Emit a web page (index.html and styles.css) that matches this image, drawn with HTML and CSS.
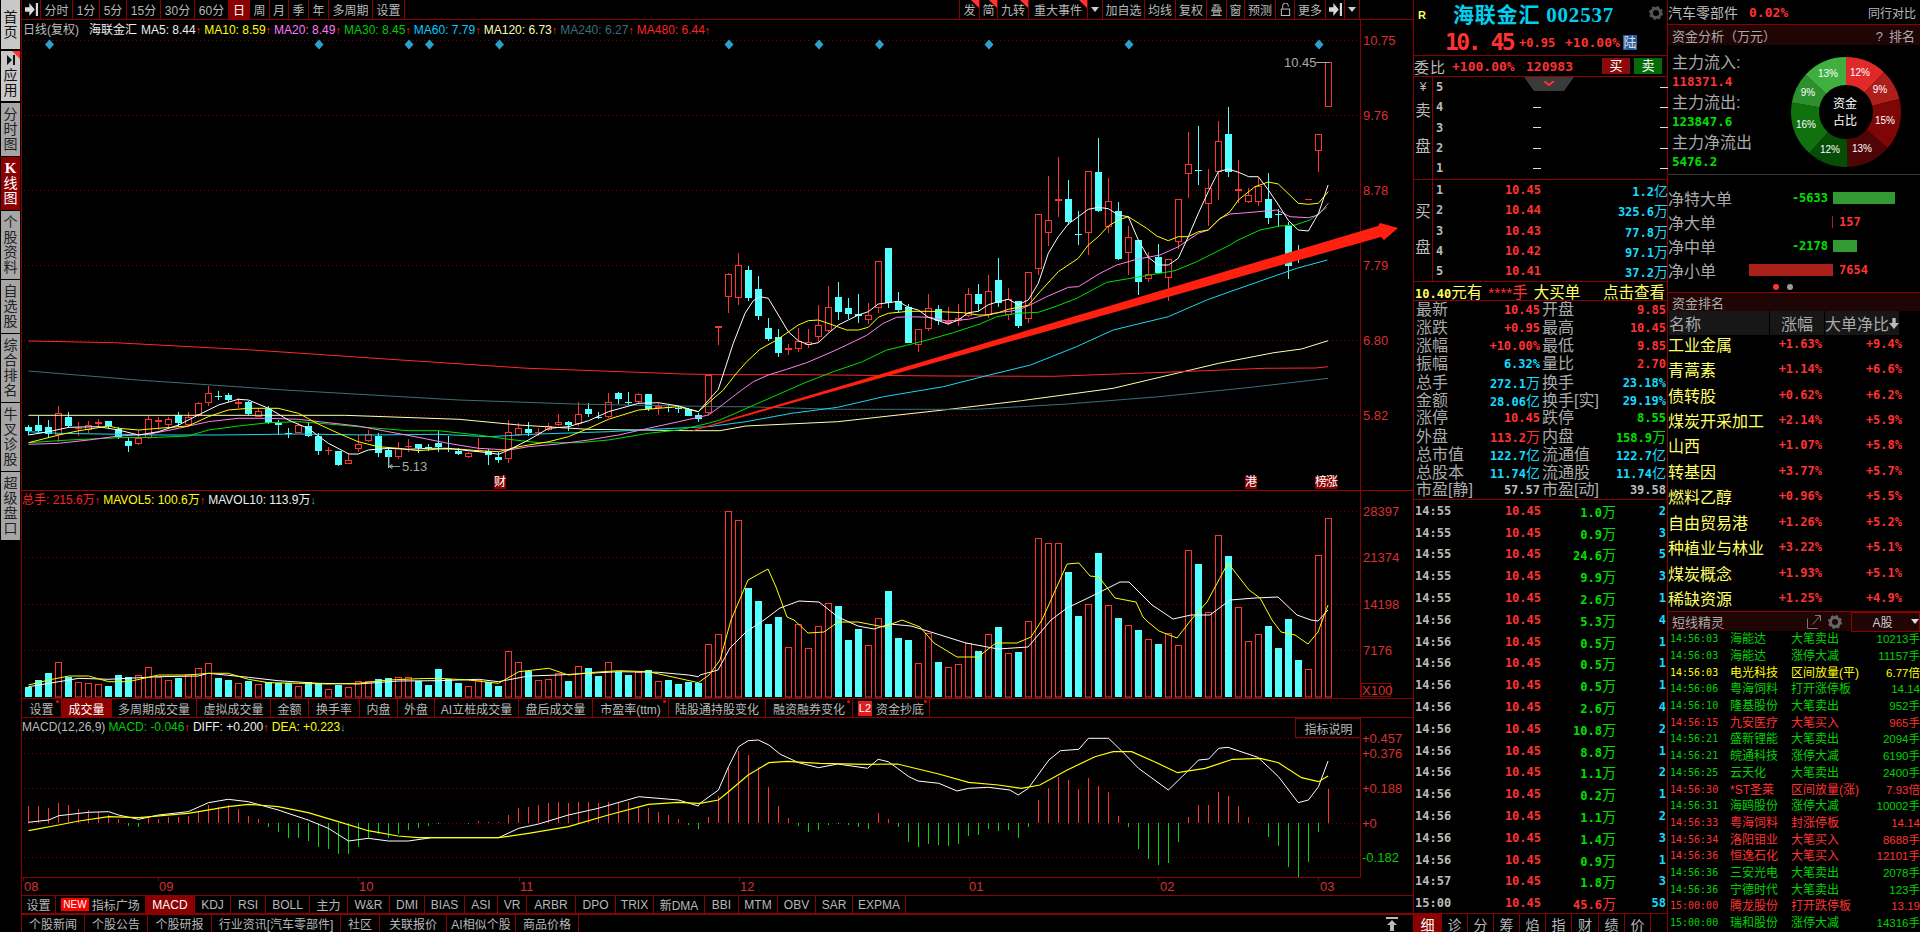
FILE: index.html
```html
<!DOCTYPE html>
<html lang="zh-CN">
<head>
<meta charset="utf-8">
<title>海联金汇 002537 日线</title>
<link rel="stylesheet" href="styles.css">
</head>
<body>
<div class="app">
  <nav class="side">
    <a class="vt lite h49">首页</a>
    <a class="vt lite h50 flag"><svg class="ic10" viewBox="0 0 10 10"><path d="M1 0l5 5-5 5zM7 0h2v10H7z" fill="#111"/></svg><span>应用</span></a>
    <a class="vt h53">分时图</a>
    <a class="vt on h53"><b class="kk">K</b><span>线图</span></a>
    <a class="vt h68">个股资料</a>
    <a class="vt h53">自选股</a>
    <a class="vt h68">综合排名</a>
    <a class="vt h68">牛叉诊股</a>
    <a class="vt h68">超级盘口</a>
  </nav>

  <main class="chartcol">
    <header class="toolbar">
      <div class="tabs tb-left">
        <a><svg class="ic12" viewBox="0 0 12 12"><path d="M0 4h4V0l5 6-5 6V8H0zM10 0h2v12h-2z" fill="#d8d8d8"/></svg></a><a>分时</a><a>1分</a><a>5分</a><a>15分</a><a>30分</a><a>60分</a><a class="on">日</a><a>周</a><a>月</a><a>季</a><a>年</a><a>多周期</a><a>设置</a>
      </div>
      <div class="tabs tb-right">
        <a class="flag">发</a><a class="flag">简</a><a class="flag">九转</a><a class="flag">重大事件</a><a><i class="caret"></i></a><a>加自选</a><a>均线</a><a>复权</a><a>叠</a><a>窗</a><a>预测</a><a><svg class="ic12" viewBox="0 0 12 14"><path d="M3 6V3a3 3 0 0 1 6 0v1" fill="none" stroke="#ccc"/><rect x="1.500" y="6.500" width="9" height="7" fill="none" stroke="#ccc"/></svg></a><a>更多</a><a><svg class="ic12" viewBox="0 0 12 12"><path d="M0 4h4V0l5 6-5 6V8H0zM10 0h2v12h-2z" fill="#d8d8d8"/></svg></a><a><i class="caret"></i></a>
      </div>
    </header>

    <section class="pane pane-main">
      <div class="legend">
        <span class="gy cn">日线(复权)</span><span class="wt cn gap">海联金汇</span>
        <span class="wt">MA5: 8.44<em>↑</em></span><span class="ylw">MA10: 8.59<em>↑</em></span><span class="mag">MA20: 8.49<em>↑</em></span><span class="grn">MA30: 8.45<em>↑</em></span><span class="cyn">MA60: 7.79<em>↑</em></span><span class="pale">MA120: 6.73<em>↑</em></span><span class="teal">MA240: 6.27<em>↑</em></span><span class="red">MA480: 6.44<em>↑</em></span>
      </div>
      <svg id="main" class="plot" viewBox="22 20 1391 471" width="1391" height="471">
        <g id="main-grid"></g>
        <g id="main-candles"></g>
        <g id="main-lines"></g>
        <text class="ax" x="1363" y="45">10.75</text>
        <text class="ax" x="1363" y="120">9.76</text>
        <text class="ax" x="1363" y="195">8.78</text>
        <text class="ax" x="1363" y="270">7.79</text>
        <text class="ax" x="1363" y="345">6.80</text>
        <text class="ax" x="1363" y="420">5.82</text>
        <text class="note" x="1284" y="67">10.45</text>
        <path d="M1316 62.500h13" stroke="#aaa" fill="none"/>
        <text class="note" x="402" y="471">5.13</text>
        <path d="M389 455v11.500h11M389 466.500l3-2v4z" stroke="#999" fill="none"/>
        <polygon points="693,430 1378,226 1380,223 1398,228 1384,240 1381,237 693,431" fill="#ff2010"/>
      </svg>
      <span class="event ev1">财</span><span class="event ev2">港</span><span class="event ev3">榜涨</span>
    </section>

    <section class="pane pane-vol">
      <div class="legend legend-vol">
        <span class="red"><span class="cn">总手</span>: 215.6万<em>↑</em></span><span class="ylw">MAVOL5: 100.6万<em>↑</em></span><span class="wt">MAVOL10: 113.9万<em class="dn">↓</em></span>
      </div>
      <svg id="vol" class="plot" viewBox="22 491 1391 207" width="1391" height="207">
        <g id="vol-grid"></g>
        <g id="vol-bars"></g>
        <g id="vol-lines"></g>
        <text class="ax" x="1363" y="516">28397</text>
        <text class="ax" x="1363" y="562">21374</text>
        <text class="ax" x="1363" y="609">14198</text>
        <text class="ax" x="1363" y="655">7176</text>
        <rect x="1361.500" y="683.500" width="29" height="13" fill="none" stroke="#8b0000"/>
        <text class="ax" x="1362" y="695">X100</text>
      </svg>
    </section>

    <div class="tabs subtabs">
      <a class="dot">设置</a><a class="on">成交量</a><a>多周期成交量</a><a>虚拟成交量</a><a>金额</a><a>换手率</a><a>内盘</a><a>外盘</a><a>AI立桩成交量</a><a>盘后成交量</a><a class="dot">市盈率(ttm)</a><a>陆股通持股变化</a><a class="dot">融资融券变化</a><a class="dot"><i class="l2">L2</i>资金抄底</a>
    </div>

    <section class="pane pane-macd">
      <div class="legend legend-macd">
        <span class="gy">MACD(12,26,9)</span><span class="grn">MACD: -0.046<em>↑</em></span><span class="wt">DIFF: +0.200<em>↑</em></span><span class="ylw">DEA: +0.223<em class="dn">↓</em></span>
      </div>
      <a class="explain">指标说明</a>
      <svg id="macd" class="plot" viewBox="22 718 1391 177" width="1391" height="177">
        <g id="macd-grid"></g>
        <g id="macd-bars"></g>
        <g id="macd-lines"></g>
        <text class="ax" x="1362" y="743">+0.457</text>
        <text class="ax" x="1362" y="758">+0.376</text>
        <text class="ax" x="1362" y="793">+0.188</text>
        <text class="ax" x="1362" y="828">+0</text>
        <text class="ax axg" x="1362" y="862">-0.182</text>
        <text class="ax" x="24" y="891">08</text>
        <text class="ax" x="159" y="891">09</text>
        <text class="ax" x="359" y="891">10</text>
        <text class="ax" x="520" y="891">11</text>
        <text class="ax" x="740" y="891">12</text>
        <text class="ax" x="969" y="891">01</text>
        <text class="ax" x="1160" y="891">02</text>
        <text class="ax" x="1320" y="891">03</text>
      </svg>
    </section>

    <div class="tabs indtabs">
      <a>设置</a><a><i class="newb">NEW</i>指标广场</a><a class="on">MACD</a><a>KDJ</a><a>RSI</a><a>BOLL</a><a>主力</a><a>W&amp;R</a><a>DMI</a><a>BIAS</a><a>ASI</a><a>VR</a><a>ARBR</a><a>DPO</a><a>TRIX</a><a>新DMA</a><a>BBI</a><a>MTM</a><a>OBV</a><a>SAR</a><a>EXPMA</a>
    </div>
    <div class="bottomrow">
      <div class="tabs newstabs">
        <a>个股新闻</a><a>个股公告</a><a>个股研报</a><a>行业资讯[汽车零部件]</a><a>社区</a><a>关联报价</a><a>AI相似个股</a><a>商品价格</a>
      </div>
      <svg class="ic-top" viewBox="0 0 12 14"><path d="M0 0h12v2H0zM6 3l5 5H8v6H4V8H1z" fill="#bbb"/></svg>
    </div>
  </main>

  <aside class="quote">
    <div class="q-head">
      <div class="q-title"><b class="rr">R</b><span class="q-name">海联金汇 002537</span><svg class="gear" viewBox="0 0 14 14"><circle cx="7" cy="7" r="4.500" fill="none" stroke="#555" stroke-width="3"/><circle cx="7" cy="7" r="6" fill="none" stroke="#555" stroke-width="2" stroke-dasharray="2.400 2.300"/></svg></div>
      <div class="q-price"><span class="big">10. 45</span><span class="n r chg">+0.95</span><span class="n r pct">+10.00%</span><i class="lu">陆</i></div>
    </div>
    <div class="q-ratio">
      <span class="lb">委比</span><span class="n r wb">+100.00%</span><span class="n r wv">120983</span><a class="btn buy">买</a><a class="btn sell">卖</a>
    </div>
    <div class="book book-sell">
      <div class="bside"><span class="yen">¥</span><span>卖</span><span>盘</span></div>
      <div class="brows">
        <div class="br"><span class="n gy">5</span><span></span><span class="dash"></span></div>
        <div class="br"><span class="n gy">4</span><span class="dash"></span><span class="dash"></span></div>
        <div class="br"><span class="n gy">3</span><span class="dash"></span><span class="dash"></span></div>
        <div class="br"><span class="n gy">2</span><span class="dash"></span><span class="dash"></span></div>
        <div class="br"><span class="n gy">1</span><span class="dash"></span><span class="dash"></span></div>
      </div>
      <div class="fold"><svg viewBox="0 0 12 6" width="12" height="6"><path d="M1 0l5 4 5-4" fill="none" stroke="#f33" stroke-width="2"/></svg></div>
    </div>
    <div class="book book-buy">
      <div class="bside"><span>买</span><span>盘</span></div>
      <div class="brows">
        <div class="br"><span class="n gy">1</span><span class="n r">10.45</span><span class="n c">1.2<i>亿</i></span></div>
        <div class="br"><span class="n gy">2</span><span class="n r">10.44</span><span class="n c">325.6<i>万</i></span></div>
        <div class="br"><span class="n gy">3</span><span class="n r">10.43</span><span class="n c">77.8<i>万</i></span></div>
        <div class="br"><span class="n gy">4</span><span class="n r">10.42</span><span class="n c">97.1<i>万</i></span></div>
        <div class="br"><span class="n gy">5</span><span class="n r">10.41</span><span class="n c">37.2<i>万</i></span></div>
      </div>
    </div>
    <div class="bigorder"><span><b class="n">10.40</b>元有</span><span class="r">****手</span><span>大买单</span><span class="right">点击查看</span></div>
    <div class="stats">
      <div class="st"><p><span>最新</span><b class="n r">10.45</b></p><p><span>开盘</span><b class="n r">9.85</b></p></div>
      <div class="st"><p><span>涨跌</span><b class="n r">+0.95</b></p><p><span>最高</span><b class="n r">10.45</b></p></div>
      <div class="st"><p><span>涨幅</span><b class="n r">+10.00%</b></p><p><span>最低</span><b class="n r">9.85</b></p></div>
      <div class="st"><p><span>振幅</span><b class="n c">6.32%</b></p><p><span>量比</span><b class="n r">2.70</b></p></div>
      <div class="st"><p><span>总手</span><b class="n c">272.1<i>万</i></b></p><p><span>换手</span><b class="n c">23.18%</b></p></div>
      <div class="st"><p><span>金额</span><b class="n c">28.06<i>亿</i></b></p><p><span>换手[实]</span><b class="n c">29.19%</b></p></div>
      <div class="st"><p><span>涨停</span><b class="n r">10.45</b></p><p><span>跌停</span><b class="n g">8.55</b></p></div>
      <div class="st"><p><span>外盘</span><b class="n r">113.2<i>万</i></b></p><p><span>内盘</span><b class="n g">158.9<i>万</i></b></p></div>
      <div class="st"><p><span>总市值</span><b class="n c">122.7<i>亿</i></b></p><p><span>流通值</span><b class="n c">122.7<i>亿</i></b></p></div>
      <div class="st"><p><span>总股本</span><b class="n c">11.74<i>亿</i></b></p><p><span>流通股</span><b class="n c">11.74<i>亿</i></b></p></div>
      <div class="st"><p><span>市盈[静]</span><b class="n gy">57.57</b></p><p><span>市盈[动]</span><b class="n gy">39.58</b></p></div>
    </div>
    <div class="ticks">
      <div class="tk"><span class="n gy">14:55</span><span class="n r">10.45</span><span class="n g">1.0<i>万</i></span><span class="n c">2</span></div>
      <div class="tk"><span class="n gy">14:55</span><span class="n r">10.45</span><span class="n g">0.9<i>万</i></span><span class="n c">3</span></div>
      <div class="tk"><span class="n gy">14:55</span><span class="n r">10.45</span><span class="n g">24.6<i>万</i></span><span class="n c">5</span></div>
      <div class="tk"><span class="n gy">14:55</span><span class="n r">10.45</span><span class="n g">9.9<i>万</i></span><span class="n c">3</span></div>
      <div class="tk"><span class="n gy">14:55</span><span class="n r">10.45</span><span class="n g">2.6<i>万</i></span><span class="n c">1</span></div>
      <div class="tk"><span class="n gy">14:56</span><span class="n r">10.45</span><span class="n g">5.3<i>万</i></span><span class="n c">4</span></div>
      <div class="tk"><span class="n gy">14:56</span><span class="n r">10.45</span><span class="n g">0.5<i>万</i></span><span class="n c">1</span></div>
      <div class="tk"><span class="n gy">14:56</span><span class="n r">10.45</span><span class="n g">0.5<i>万</i></span><span class="n c">1</span></div>
      <div class="tk"><span class="n gy">14:56</span><span class="n r">10.45</span><span class="n g">0.5<i>万</i></span><span class="n c">1</span></div>
      <div class="tk"><span class="n gy">14:56</span><span class="n r">10.45</span><span class="n g">2.6<i>万</i></span><span class="n c">4</span></div>
      <div class="tk"><span class="n gy">14:56</span><span class="n r">10.45</span><span class="n g">10.8<i>万</i></span><span class="n c">2</span></div>
      <div class="tk"><span class="n gy">14:56</span><span class="n r">10.45</span><span class="n g">8.8<i>万</i></span><span class="n c">1</span></div>
      <div class="tk"><span class="n gy">14:56</span><span class="n r">10.45</span><span class="n g">1.1<i>万</i></span><span class="n c">2</span></div>
      <div class="tk"><span class="n gy">14:56</span><span class="n r">10.45</span><span class="n g">0.2<i>万</i></span><span class="n c">1</span></div>
      <div class="tk"><span class="n gy">14:56</span><span class="n r">10.45</span><span class="n g">1.1<i>万</i></span><span class="n c">2</span></div>
      <div class="tk"><span class="n gy">14:56</span><span class="n r">10.45</span><span class="n g">1.4<i>万</i></span><span class="n c">3</span></div>
      <div class="tk"><span class="n gy">14:56</span><span class="n r">10.45</span><span class="n g">0.9<i>万</i></span><span class="n c">1</span></div>
      <div class="tk"><span class="n gy">14:57</span><span class="n r">10.45</span><span class="n g">1.8<i>万</i></span><span class="n c">3</span></div>
      <div class="tk"><span class="n gy">15:00</span><span class="n r">10.45</span><span class="n r">45.6<i>万</i></span><span class="n c">58</span></div>
    </div>
    <div class="tabs qtabs">
      <a class="on">细</a><a>诊</a><a>分</a><a>筹</a><a>焰</a><a>指</a><a>财</a><a>绩</a><a>价</a>
    </div>
  </aside>

  <aside class="funds">
    <div class="f-top"><span>汽车零部件</span><b class="n r fpct">0.02%</b><span class="peer">同行对比</span></div>
    <div class="bar"><span>资金分析（万元）</span><span class="bar-r"><i>?</i>排名</span></div>
    <div class="f-flow">
      <div class="f-col">
        <p>主力流入:</p><p class="n r">118371.4</p>
        <p>主力流出:</p><p class="n g">123847.6</p>
        <p>主力净流出</p><p class="n g">5476.2</p>
      </div>
      <svg class="donut" viewBox="1791 58 110 110" width="110" height="110">
        <g transform="rotate(-90 1846 113)" fill="none" stroke-width="28">
          <circle cx="1846" cy="113" r="41" pathLength="99" stroke="#e02a2a" stroke-dasharray="12 87"/>
          <circle cx="1846" cy="113" r="41" pathLength="99" stroke="#ae1e1a" stroke-dasharray="9 90" stroke-dashoffset="-12"/>
          <circle cx="1846" cy="113" r="41" pathLength="99" stroke="#7e0606" stroke-dasharray="15 84" stroke-dashoffset="-21"/>
          <circle cx="1846" cy="113" r="41" pathLength="99" stroke="#4f0505" stroke-dasharray="13 86" stroke-dashoffset="-36"/>
          <circle cx="1846" cy="113" r="41" pathLength="99" stroke="#064d06" stroke-dasharray="12 87" stroke-dashoffset="-49"/>
          <circle cx="1846" cy="113" r="41" pathLength="99" stroke="#0f720f" stroke-dasharray="16 83" stroke-dashoffset="-61"/>
          <circle cx="1846" cy="113" r="41" pathLength="99" stroke="#2e8f2e" stroke-dasharray="9 90" stroke-dashoffset="-77"/>
          <circle cx="1846" cy="113" r="41" pathLength="99" stroke="#3fb03f" stroke-dasharray="13 86" stroke-dashoffset="-86"/>
        </g>
        <text class="dl" x="1860" y="77">12%</text><text class="dl" x="1880" y="94">9%</text>
        <text class="dl" x="1885" y="125">15%</text><text class="dl" x="1862" y="153">13%</text>
        <text class="dl" x="1830" y="154">12%</text><text class="dl" x="1806" y="129">16%</text>
        <text class="dl" x="1808" y="97">9%</text><text class="dl" x="1828" y="78">13%</text>
        <text class="dc" x="1845" y="109">资金</text><text class="dc" x="1845" y="126">占比</text>
      </svg>
    </div>
    <div class="f-net">
      <div class="nr"><span class="nl">净特大单</span><div class="nm"><b class="n g">-5633</b></div><div class="np"><i class="nb gb" style="width:62px"></i></div></div>
      <div class="nr"><span class="nl">净大单</span><div class="nm"></div><div class="np"><i class="nb rb thin"></i><b class="n r nv">157</b></div></div>
      <div class="nr"><span class="nl">净中单</span><div class="nm"><b class="n g">-2178</b></div><div class="np"><i class="nb gb" style="width:24px"></i></div></div>
      <div class="nr"><span class="nl">净小单</span><div class="nm"><i class="nb rb" style="width:84px"></i></div><div class="np"><b class="n r nv">7654</b></div></div>
      <div class="dots"><i class="d1"></i><i class="d2"></i></div>
    </div>
    <div class="bar bar-s"><span>资金排名</span></div>
    <div class="rk-head"><span class="h1">名称</span><span class="h2">涨幅</span><span class="h3">大单净比<svg viewBox="0 0 12 13" width="12" height="13"><path d="M4 0h4v6h4l-6 7-6-7h4z" fill="#bbb"/></svg></span></div>
    <div class="rk">
      <div class="rr-row"><span>工业金属</span><b class="n r">+1.63%</b><b class="n r">+9.4%</b></div>
      <div class="rr-row"><span>青蒿素</span><b class="n r">+1.14%</b><b class="n r">+6.6%</b></div>
      <div class="rr-row"><span>债转股</span><b class="n r">+0.62%</b><b class="n r">+6.2%</b></div>
      <div class="rr-row"><span>煤炭开采加工</span><b class="n r">+2.14%</b><b class="n r">+5.9%</b></div>
      <div class="rr-row"><span>山西</span><b class="n r">+1.07%</b><b class="n r">+5.8%</b></div>
      <div class="rr-row"><span>转基因</span><b class="n r">+3.77%</b><b class="n r">+5.7%</b></div>
      <div class="rr-row"><span>燃料乙醇</span><b class="n r">+0.96%</b><b class="n r">+5.5%</b></div>
      <div class="rr-row"><span>自由贸易港</span><b class="n r">+1.26%</b><b class="n r">+5.2%</b></div>
      <div class="rr-row"><span>种植业与林业</span><b class="n r">+3.22%</b><b class="n r">+5.1%</b></div>
      <div class="rr-row"><span>煤炭概念</span><b class="n r">+1.93%</b><b class="n r">+5.1%</b></div>
      <div class="rr-row"><span>稀缺资源</span><b class="n r">+1.25%</b><b class="n r">+4.9%</b></div>
    </div>
    <div class="bar bar-d"><span>短线精灵</span><span class="bar-ic"><svg viewBox="0 0 14 14" width="14" height="14"><path d="M.5 3.500v10h10M8 .5h5.500v5.500M13.500.5l-8 9" fill="none" stroke="#777"/></svg><svg viewBox="0 0 14 14" width="14" height="14"><circle cx="7" cy="7" r="4.500" fill="none" stroke="#666" stroke-width="3"/><circle cx="7" cy="7" r="6" fill="none" stroke="#666" stroke-width="2" stroke-dasharray="2.400 2.300"/></svg></span><span class="mkt">A股<i class="caret cw"></i></span></div>
    <div class="sprite">
      <div class="sp g"><span class="n2">14:56:03</span><span>海能达</span><span>大笔卖出</span><span class="sv">10213手</span></div>
      <div class="sp g"><span class="n2">14:56:03</span><span>海能达</span><span>涨停大减</span><span class="sv">11157手</span></div>
      <div class="sp y"><span class="n2">14:56:03</span><span>电光科技</span><span>区间放量(平)</span><span class="sv">6.77倍</span></div>
      <div class="sp g"><span class="n2">14:56:06</span><span>粤海饲料</span><span>打开涨停板</span><span class="sv">14.14</span></div>
      <div class="sp g"><span class="n2">14:56:10</span><span>隆基股份</span><span>大笔卖出</span><span class="sv">952手</span></div>
      <div class="sp r"><span class="n2">14:56:15</span><span>九安医疗</span><span>大笔买入</span><span class="sv">965手</span></div>
      <div class="sp g"><span class="n2">14:56:21</span><span>盛新锂能</span><span>大笔卖出</span><span class="sv">2094手</span></div>
      <div class="sp g"><span class="n2">14:56:21</span><span>皖通科技</span><span>涨停大减</span><span class="sv">6190手</span></div>
      <div class="sp g"><span class="n2">14:56:25</span><span>云天化</span><span>大笔卖出</span><span class="sv">2400手</span></div>
      <div class="sp r"><span class="n2">14:56:30</span><span>*ST圣莱</span><span>区间放量(涨)</span><span class="sv">7.93倍</span></div>
      <div class="sp g"><span class="n2">14:56:31</span><span>海鸥股份</span><span>涨停大减</span><span class="sv">10002手</span></div>
      <div class="sp r"><span class="n2">14:56:33</span><span>粤海饲料</span><span>封涨停板</span><span class="sv">14.14</span></div>
      <div class="sp r"><span class="n2">14:56:34</span><span>洛阳钼业</span><span>大笔买入</span><span class="sv">8688手</span></div>
      <div class="sp r"><span class="n2">14:56:36</span><span>恒逸石化</span><span>大笔买入</span><span class="sv">12101手</span></div>
      <div class="sp g"><span class="n2">14:56:36</span><span>三安光电</span><span>大笔卖出</span><span class="sv">2078手</span></div>
      <div class="sp g"><span class="n2">14:56:36</span><span>宁德时代</span><span>大笔卖出</span><span class="sv">123手</span></div>
      <div class="sp r"><span class="n2">15:00:00</span><span>腾龙股份</span><span>打开跌停板</span><span class="sv">13.19</span></div>
      <div class="sp g"><span class="n2">15:00:00</span><span>瑞和股份</span><span>涨停大减</span><span class="sv">14316手</span></div>
    </div>
  </aside>
</div>
<script src="chart.js"></script>
</body>
</html>
```
FILE: styles.css
```css
* { box-sizing: border-box; }
html, body { margin: 0; height: 100%; background: #000; overflow: hidden; }
body { font-family: "Liberation Sans", "Noto Sans CJK SC", sans-serif; color: #b8b8b8; font-size: 12px; }
p { margin: 0; }
i, em { font-style: normal; }
svg { display: block; }

.app { display: grid; grid-template-columns: 21px 1392px 254px 253px; height: 932px; width: 1920px; overflow: hidden; }

/* left rail */
.side { display: flex; flex-direction: column; padding: 0 0 0 1px; }
.vt { width: 19px; background: #a6a6a6; color: #222; display: flex; flex-direction: column; align-items: center; justify-content: center; font-size: 14px; line-height: 15px; margin-bottom: 1px; position: relative; }
.vt, .vt span { text-align: center; }
.vt.lite { background: #c8c8c8; color: #111; margin-bottom: 2px; }
.vt.on { background: #8b0000; color: #fff; }
.vt span { display: block; width: 14px; }
.vt .kk { font-family: "Liberation Serif", serif; font-size: 15px; line-height: 15px; }
.vt .ic10 { width: 10px; height: 10px; margin-bottom: 3px; }
.h49 { height: 49px; width: 19px; word-break: break-all; }
.h50 { height: 50px; } .h53 { height: 53px; } .h68 { height: 68px; }
.h49, .h53, .h68 { padding: 0 2.500px; display: block; align-content: center; word-break: break-all; }
.flag::after { content: ""; position: absolute; top: 0; right: 0; border-top: 8px solid #f33; border-left: 8px solid transparent; }

/* center column */
.chartcol { display: flex; flex-direction: column; border-left: 1px solid #8b0000; height: 932px; }
.toolbar { height: 20px; display: flex; justify-content: space-between; border-bottom: 1px solid #8b0000; padding-right: 53px; flex: none; }
.tabs { display: grid; grid-auto-flow: column; }
.tabs a { display: flex; align-items: center; justify-content: center; border-right: 1px solid #8b0000; color: #b8b8b8; white-space: nowrap; position: relative; min-width: 0; }
.tabs a.on { background: #8b0000; color: #fff; }
.tb-left { grid-template-columns: 19px 32px 27px 27px 34px 34px 34px 21px 20px 19px 20px 20px 44px 32px; }
.tb-right { grid-template-columns: 20px 18px 31px 59px 15px 42px 31px 31px 20px 18px 31px 19px 31px 19px 15px; border-left: 1px solid #8b0000; }
.ic12 { width: 13px; height: 13px; }
.caret { width: 0; height: 0; border: 4px solid transparent; border-top: 5px solid #ccc; border-bottom: 0; }
.cw { border-top-color: #ddd; }

.pane { position: relative; flex: none; }
.plot { overflow: hidden; }
.plot text { font-family: "Liberation Sans", sans-serif; }
.pane-main { height: 471px; }
.pane-vol { height: 207px; }
.pane-macd { height: 177px; }
.legend { position: absolute; left: 1px; top: 3px; display: flex; gap: 3px; font-size: 12px; line-height: 15px; white-space: nowrap; z-index: 1; }
.legend em { color: #f22; font-size: 11px; }
.legend em.dn { color: #2bb; }
.legend-vol, .legend-macd { top: 2px; left: 0; }
.legend .gap { margin-left: 7px; margin-right: 1px; }
.gy { color: #bbb; } .wt { color: #eee; } .ylw { color: #ff0; } .mag { color: #f7f; } .grn { color: #0c0; } .cyn { color: #0cf; } .pale { color: #ffffb0; } .teal { color: #3a6f78; } .red { color: #f22; }
.ax { fill: #d83030; font-size: 13px; }
.axg { fill: #00c800; }
.note { fill: #aaa; font-size: 13px; }
.event { position: absolute; top: 456px; background: #8b0000; color: #fff; font-size: 12px; line-height: 13px; height: 13px; text-align: center; }
.ev1 { left: 472px; width: 12px; }
.ev2 { left: 1223px; width: 12px; }
.ev3 { left: 1293px; width: 22px; letter-spacing: -1px; }
.explain { position: absolute; top: 0; left: 1273px; width: 66px; height: 20px; border: 1px solid #8b0000; border-width: 1px 0 1px 1px; display: flex; align-items: center; justify-content: center; color: #bbb; z-index: 1; }

.subtabs { height: 20px; flex: none; border-top: 1px solid #8b0000; border-bottom: 1px solid #8b0000; grid-template-columns: 40px 50px 85px 74px 38px 51px 38px 37px 84px 74px 76px 97px 87px 77px; justify-content: start; }
.indtabs { height: 18px; flex: none; border-top: 1px solid #8b0000; grid-template-columns: 34px 90px 49px 36px 35px 44px 38px 42px 35px 40px 33px 29px 49px 40px 38px 51px 34px 39px 38px 37px 53px; justify-content: start; }
.bottomrow { flex: 1; display: flex; justify-content: space-between; align-items: center; border-top: 2px solid #8b0000; padding-right: 15px; }
.newstabs { height: 100%; grid-template-columns: 63px 63px 64px 129px 39px 67px 69px 63px; }
.ic-top { width: 12px; height: 14px; }
.dot::before { content: ""; position: absolute; top: 1px; right: 2px; width: 3px; height: 3px; border-radius: 50%; background: #f00; }
.l2 { background: #e02020; color: #fff; font-size: 11px; width: 14px; height: 15px; line-height: 15px; text-align: center; margin-right: 4px; }
.newb { background: #f00; color: #fff; font-size: 10px; line-height: 13px; padding: 0 2px; margin-right: 3px; }

/* number styles */
.n { font-family: "DejaVu Sans Mono", "Noto Sans CJK SC", monospace; font-weight: bold; font-size: 12px; }
.n i { font-family: "Noto Sans CJK SC", sans-serif; font-weight: 400; font-size: 14px; }
.r { color: #ff3232; } .g { color: #00e000; } .c { color: #14dcff; } .y { color: #ffff50; }

/* quote panel */
.quote { border-left: 1px solid #8b0000; display: flex; flex-direction: column; height: 932px; }
.q-head { height: 56px; border-bottom: 1px solid #8b0000; flex: none; }
.q-title { height: 30px; display: flex; align-items: center; padding-left: 4px; position: relative; }
.rr { color: #ff5; font-size: 11px; width: 35px; }
.q-name { color: #00d0f0; font: bold 21px/24px "Liberation Serif", "Noto Sans CJK SC", serif; letter-spacing: .800px; white-space: nowrap; }
.gear { width: 14px; height: 14px; position: absolute; right: 4px; top: 6px; }
.q-price { display: flex; align-items: center; padding-left: 31px; height: 25px; }
.big { color: #ff3232; font: bold 23px/25px "DejaVu Sans Mono", monospace; letter-spacing: -2.500px; width: 74px; white-space: pre; }
.chg { width: 46px; }
.pct { width: 58px; font-size: 13px; }
.lu { background: #2a5aa0; color: #ddd; width: 14px; height: 15px; font-size: 13px; line-height: 15px; text-align: center; }
.q-ratio { height: 21px; flex: none; border-bottom: 1px solid #8b0000; display: flex; align-items: center; }
.lb { font-size: 15px; color: #bbb; width: 38px; letter-spacing: 1px; }
.wb { width: 74px; font-size: 13px; }
.wv { width: 76px; font-size: 13px; }
.btn { width: 28px; height: 16px; font-size: 13px; line-height: 16px; text-align: center; color: #fff; margin-right: 4px; }
.buy { background: #8b0a0a; } .sell { background: #056b05; }
.book { flex: none; display: flex; border-bottom: 1px solid #8b0000; position: relative; }
.book-sell { height: 103px; }
.book-buy { height: 102px; }
.bside { width: 19px; border-right: 1px solid #8b0000; display: flex; flex-direction: column; align-items: center; gap: 20px; font-size: 15.500px; line-height: 16px; color: #bbb; flex: none; }
.book-sell .bside { padding-top: 3px; }
.book-buy .bside { padding-top: 24px; }
.yen { font-size: 12px; line-height: 15px; margin-bottom: -12px; }
.brows { display: grid; grid-auto-rows: 20.300px; flex: 1; }
.br { display: grid; grid-template-columns: 16px 89px 127px; align-items: center; padding-left: 3px; justify-items: end; }
.br > span:first-child { justify-self: start; }
.dash { width: 8px; height: 1px; background: #ddd; }
.fold { position: absolute; left: 110px; top: 0; width: 50px; height: 14px; background: #3a3a3a; clip-path: polygon(0 0, 100% 0, 80% 100%, 20% 100%); display: flex; justify-content: center; padding-top: 4px; }
.bigorder { height: 19px; flex: none; border-bottom: 1px solid #8b0000; display: flex; gap: 6px; align-items: center; padding-left: 1px; color: #ffff60; font-size: 15.500px; white-space: nowrap; }
.bigorder .n { color: #ffff60; font-size: 12px; }
.bigorder .right { margin-left: auto; padding-right: 2px; }
.stats { height: 199px; flex: none; border-bottom: 1px solid #8b0000; display: grid; grid-auto-rows: 18px; }
.st { display: grid; grid-template-columns: 124px 124px; column-gap: 2px; padding-left: 2px; }
.st p { display: flex; justify-content: space-between; align-items: center; font-size: 16px; line-height: 18px; color: #aaa; white-space: nowrap; }
.st .n i { font-size: 14px; }
.ticks { height: 413px; flex: none; display: grid; grid-auto-rows: 21.800px; }
.tk { display: grid; grid-template-columns: 60px 66px 75px 50px; padding-left: 1px; align-items: center; justify-items: end; }
.tk > span:first-child { justify-self: start; }
.qtabs { flex: 1; border-top: 1px solid #8b0000; grid-template-columns: 28px 26px 26px 26px 26px 26px 27px 26px 26px; justify-content: start; font-size: 14px; }

/* funds panel */
.funds { border-left: 1px solid #8b0000; display: flex; flex-direction: column; height: 932px; }
.f-top { height: 25px; border-bottom: 1px solid #8b0000; flex: none; display: flex; align-items: center; font-size: 14px; color: #bbb; white-space: nowrap; }
.fpct { margin-left: 11px; font-size: 13px; }
.peer { margin-left: auto; padding-right: 4px; font-size: 12px; }
.bar { background: #200505; color: #aaa; height: 20px; flex: none; display: flex; align-items: center; padding-left: 4px; font-size: 13px; white-space: nowrap; }
.bar-r { margin-left: auto; padding-right: 5px; font-size: 13px; }
.bar-r i { margin-right: 6px; }
.f-flow { height: 130px; flex: none; display: flex; border-bottom: 1px solid #333; padding-left: 4px; }
.f-col { width: 119px; padding-top: 6px; display: grid; grid-auto-rows: 20px; align-items: center; font-size: 16px; color: #aaa; }
.f-col .n { font-size: 12.500px; }
.donut { margin-top: 12px; }
.dl { fill: #fff; font-size: 10px; text-anchor: middle; }
.dc { fill: #fff; font-size: 12px; text-anchor: middle; font-family: "Noto Sans CJK SC", sans-serif; }
.f-net { height: 117px; flex: none; padding-top: 11px; display: grid; grid-auto-rows: 24px; }
.nr { display: grid; grid-template-columns: 70px 95px 1fr; align-items: center; }
.nl { font-size: 16px; color: #aaa; white-space: nowrap; }
.nm { display: flex; justify-content: flex-end; align-items: center; }
.nm b { padding-right: 5px; }
.np { display: flex; align-items: center; }
.nb { display: block; height: 12px; }
.gb { background: #339933; } .rb { background: #aa201a; }
.thin { width: 1px; margin-left: -1px; }
.nv { margin-left: 6px; }
.dots { display: flex; gap: 8px; justify-content: center; padding-right: 23px; padding-top: 2px; }
.dots i { width: 6px; height: 6px; border-radius: 50%; }
.d1 { background: #f33; } .d2 { background: #999; }
.bar-s { border-top: 1px solid #8b0000; height: 19px; }
.rk-head { height: 20px; flex: none; display: grid; grid-template-columns: 101px 55px 75px; font-size: 16px; color: #aaa; padding-left: 1px; }
.rk-head span { background: #171717; display: flex; align-items: center; margin-right: 1px; white-space: nowrap; }
.rk-head .h2 { justify-content: center; }
.rk { height: 280px; flex: none; display: grid; grid-auto-rows: 25.450px; }
.rr-row { display: grid; grid-template-columns: 98px 56px 80px; align-items: center; color: #ffff66; font-size: 16px; white-space: nowrap; }
.rr-row b { justify-self: end; }
.bar-d { height: 20px; position: relative; border-top: 1px solid #8b0000; }
.bar-ic { margin-left: auto; display: flex; gap: 7px; margin-right: 9px; }
.mkt { width: 69px; height: 20px; border: 1px solid #8b0000; display: flex; align-items: center; justify-content: center; color: #ccc; gap: 18px; font-size: 12px; padding-left: 20px; }
.sprite { flex: 1; display: grid; grid-auto-rows: 16.700px; }
.sp { display: grid; grid-template-columns: 60px 61px 82px 1fr; align-items: center; padding-left: 2px; font-size: 12px; line-height: 16px; white-space: nowrap; }
.sp.g { color: #00d400; } .sp.r { color: #ff3232; } .sp.y { color: #ff0; }
.n2 { font-family: "DejaVu Sans Mono", monospace; font-size: 10px; }
.sv { justify-self: end; font-size: 11.500px; }
```
FILE: chart.js
```js
(function () {
  var NS = 'http://www.w3.org/2000/svg';
  var RED = '#ff3232', CY = '#54ffff', GR = '#00d800', GRID = '#7a0000';
  function el(parent, tag, attrs) {
    var e = document.createElementNS(NS, tag);
    for (var k in attrs) e.setAttribute(k, attrs[k]);
    document.getElementById(parent).appendChild(e);
    return e;
  }
  function X(i) { return Math.floor(28.5 + i * 9.998); }

  // zoom-crop readings -> page coordinates
  var T = {
    a: function (x, y) { return [x / 2.178, 300 + y / 3]; },
    b: function (x, y) { return [700 + x / 2.178, 300 + y / 3]; },
    c: function (x, y) { return [700 + x / 2.178, y / 3]; },
    d: function (x, y) { return [x / 2.178, 620 + y / 3]; },
    e: function (x, y) { return [700 + x / 2.178, 620 + y / 3]; },
    f: function (x, y) { return [690 + x / 3, 230 + y / 3]; },
    g: function (x, y) { return [930 + x / 3, 150 + y / 3]; },
    h: function (x, y) { return [1180 + x / 3, 120 + y / 3]; },
    r: function (x, y) { return [x, y]; }
  };
  function line(g, color, parts, width) {
    var pts = [];
    parts.forEach(function (p) {
      var f = T[p[0]], a = p[1];
      for (var i = 0; i < a.length; i += 2) pts.push(f(a[i], a[i + 1]).map(function (v) { return v.toFixed(1); }).join(','));
    });
    el(g, 'polyline', { points: pts.join(' '), fill: 'none', stroke: color, 'stroke-width': width || 1 });
  }
  function grid(g, ys, x2) {
    ys.forEach(function (y) {
      el(g, 'line', { x1: 24, x2: x2 || 1360, y1: y + .5, y2: y + .5, stroke: GRID, 'stroke-dasharray': '1 3' });
    });
  }

  /* ---------- candles ---------- */
  var z = function (v) { return 300 + v / 3; };
  var lowerC = [
    'c',380,392,375,405,'c',375,392,348,400,'c',382,402,360,415,'r',340,405,318,425,'c',352,378,336,385,'r',385,388,365,408,
    'r',375,390,362,400,'r',367,373,357,382,'c',364,378,362,385,'c',388,412,380,418,'c',423,438,410,455,'r',413,433,390,435,
    'r',358,413,348,416,'r',360,365,350,390,'r',358,374,350,380,'c',344,370,335,380,'r',350,374,337,378,'r',310,346,305,350,
    'r',280,308,258,318,'c',289,291,273,300,'c',285,300,280,305,'r',306,312,295,325,'c',305,342,302,345,'r',332,350,323,352,
    'c',328,370,318,372,'c',369,374,360,406,'c',400,402,385,415,'r',376,398,370,400,'c',378,408,365,410,'c',408,454,400,465,
    'r',450,454,440,465,'c',454,495,452,497,'r',481,491,460,492,'r',433,448,405,455,'r',403,423,390,425,'c',408,460,400,470,
    'c',450,470,440,505,'r',444,470,425,478,'r',439,441,418,455,'c',433,444,433,458,'c',441,444,432,452,'c',430,442,392,455,
    'c',443,446,408,455,'c',453,461,445,465,'r',458,470,455,473,'r',450,452,414,455,'c',453,464,448,495,'c',472,480,455,488,
    'r',395,478,360,490,'r',385,404,370,408,'c',388,399,365,408,'r',395,397,385,408,'r',377,389,370,392,'r',365,374,342,378,
    'c',366,374,362,392,'r',343,373,306,378,'c',328,343,310,352,'c',350,355,337,358,'r',305,350,280,353,'c',280,297,276,312,
    'c',307,310,277,315,'r',283,305,278,310,'c',282,327,282,333,'r',318,323,310,345,'c',320,323,316,335,'c',325,328,318,338,
    'c',328,347,325,349,'c',345,356,340,365
  ];
  var candles = [];
  for (var n = 0; n < lowerC.length; n += 5) {
    candles.push([lowerC[n], z(lowerC[n + 3]), z(lowerC[n + 1]), z(lowerC[n + 2]), z(lowerC[n + 4])]);
  }
  [
    ['r',375,375,413,415],['r',326,326,328,345],['r',273,274,297,313],['r',253,265,298,305],['c',266,270,298,301],['c',276,289,316,320],
    ['c',318,328,339,341],['c',329,337,353,357],['r',344,348,350,355],['r',328,341,349,352],['r',329,342,345,348],['r',305,325,337,342],
    ['r',286,307,331,332],['c',282,297,312,320],['c',298,308,314,319],['c',294,314,316,323],['r',303,315,320,324],['r',261,261,308,313],
    ['c',248,248,303,308],['c',292,301,310,313],['c',304,307,343,343],['r',329,329,345,352],['r',294,308,329,331],['c',305,309,321,325],
    ['r',307,321,323,325],['r',304,318,321,326],['r',288,294,316,317],['c',284,294,304,311],['r',275,291,315,318],['c',258,280,303,307],
    ['r',288,299,315,320],['c',301,301,326,328],['r',272,272,319,323],['r',214,214,269,275],['r',176,220,233,246],['r',157,199,201,217],
    ['c',180,199,222,225],['c',211,234,235,245],['r',171,171,233,255],['c',138,172,211,212],['r',178,201,227,233],['c',202,211,259,260],
    ['r',226,237,253,275],['c',240,240,282,295],['r',252,274,279,282],['c',244,257,273,274],['r',259,259,278,301],['r',199,199,242,249],
    ['r',132,164,174,198],['c',126,170,171,185],['r',169,188,204,226],['r',121,141,172,200],['c',107,134,172,177],['r',160,189,191,203],
    ['r',188,195,202,203],['r',177,186,202,206],['c',173,199,218,224],['c',209,214,215,227],['c',222,226,266,279],['c',245,253,254,263],
    ['r',199,199,200,200],['r',134,134,151,172],['r',62,62,107,107]
  ].forEach(function (c) { candles.push(c); });

  candles.forEach(function (c, i) {
    var x = X(i), col = c[0] === 'r' ? RED : CY, hi = Math.round(c[1]), top = Math.round(c[2]), bot = Math.round(c[3]), lo = Math.round(c[4]);
    if (hi < top) el('main-candles', 'path', { d: 'M' + (x + .5) + ' ' + hi + 'V' + top, stroke: col });
    if (lo > bot) el('main-candles', 'path', { d: 'M' + (x + .5) + ' ' + bot + 'V' + lo, stroke: col });
    if (bot - top <= 2) {
      el('main-candles', 'rect', { x: x - 3, y: top, width: 7, height: Math.max(1, bot - top), fill: col });
    } else if (c[0] === 'r') {
      el('main-candles', 'rect', { x: x - 2.5, y: top + .5, width: 6, height: bot - top - 1, fill: '#000', stroke: col });
    } else {
      el('main-candles', 'rect', { x: x - 3, y: top, width: 7, height: bot - top, fill: col });
    }
  });

  /* ---------- overlays ---------- */
  grid('main-grid', [40, 115, 190, 265, 340, 415]);
  el('main-grid', 'path', { d: 'M22 490.500H1413', stroke: '#a00000' });
  el('main-grid', 'path', { d: 'M1360.500 20V490', stroke: '#8b0000' });
  [49.5, 319, 409, 429.5, 499.5, 729, 819, 879.5, 989, 1129, 1319].forEach(function (x) {
    el('main-grid', 'polygon', { points: x + ',39.5 ' + (x + 4.5) + ',44.5 ' + x + ',49.5 ' + (x - 4.5) + ',44.5', fill: '#2aa0cc' });
  });

  line('main-lines', '#ffffb0', [['a', [62, 346, 400, 346, 750, 346, 1000, 358, 1130, 375, 1280, 388, 1500, 392, 1568, 392]],
    ['b', [100, 378, 300, 365, 530, 330, 700, 302, 900, 265, 1130, 190, 1250, 158, 1310, 147, 1368, 122]]]);
  line('main-lines', '#3a6f78', [['a', [62, 213, 300, 240, 620, 270, 1000, 300, 1250, 312, 1568, 320]],
    ['b', [100, 320, 300, 328, 600, 328, 800, 312, 1000, 290, 1200, 262, 1368, 235]]]);
  line('main-lines', '#ff2a2a', [['a', [62, 123, 250, 128, 550, 150, 850, 178, 1150, 205, 1490, 222, 1568, 224]],
    ['b', [220, 224, 530, 228, 770, 229, 1030, 216, 1230, 205, 1340, 204, 1368, 200]]]);
  line('main-lines', '#18d8f0', [['a', [62, 395, 128, 400, 258, 403, 345, 405, 476, 405, 650, 402, 802, 405, 955, 403, 1064, 410, 1173, 402, 1325, 395, 1434, 387, 1543, 380]],
    ['b', [100, 365, 200, 340, 300, 322, 400, 290, 530, 260, 630, 225, 720, 195, 820, 140, 900, 90, 1020, 50]],
    ['h', [80, 540, 150, 515, 250, 480, 350, 445, 442, 420]]]);
  line('main-lines', '#00e000', [['a', [62, 428, 150, 420, 258, 413, 345, 412, 410, 408, 454, 390, 519, 378, 585, 368, 650, 365, 715, 372, 780, 380, 889, 392, 955, 392, 1042, 405, 1108, 418, 1173, 428, 1260, 428, 1325, 420, 1412, 400, 1478, 390, 1543, 370, 1568, 360]],
    ['f', [295, 480, 345, 458, 430, 425, 515, 396, 590, 360, 650, 346, 720, 328]],
    ['g', [70, 548, 150, 522, 200, 500, 260, 490, 325, 487, 375, 470, 440, 445, 530, 397, 620, 382, 735, 362, 800, 335, 900, 285]],
    ['h', [170, 362, 240, 330, 300, 318, 345, 315, 390, 300, 440, 262]]]);
  line('main-lines', '#ff80f0', [['a', [62, 433, 128, 430, 193, 420, 258, 408, 323, 403, 389, 385, 454, 365, 519, 355, 585, 355, 650, 358, 715, 368, 780, 378, 846, 395, 911, 412, 976, 430, 1042, 445, 1108, 450, 1151, 440, 1216, 432, 1282, 420, 1347, 405, 1412, 385, 1478, 365, 1543, 345, 1568, 320]],
    ['f', [155, 480, 190, 455, 235, 435, 290, 418, 350, 398, 420, 368, 470, 345, 530, 316, 580, 280, 620, 262, 660, 260, 720, 262]],
    ['g', [50, 513, 115, 508, 190, 490, 265, 480, 300, 465, 350, 440, 415, 412, 445, 410, 510, 370, 560, 345, 620, 328, 690, 315, 745, 290, 805, 250, 835, 240, 870, 205, 900, 192]],
    ['h', [200, 278, 290, 270, 330, 290, 385, 293, 415, 285, 445, 250]]]);
  line('main-lines', '#ffff00', [['a', [62, 428, 128, 405, 172, 392, 237, 378, 258, 385, 302, 390, 345, 385, 410, 378, 454, 350, 497, 330, 541, 325, 606, 325, 650, 340, 693, 372, 737, 400, 780, 425, 824, 440, 867, 445, 911, 452, 955, 447, 998, 447, 1042, 452, 1086, 455, 1130, 440, 1195, 425, 1238, 410, 1282, 385, 1325, 358, 1391, 330, 1434, 325, 1478, 320, 1521, 335]],
    ['f', [100, 480, 135, 435, 170, 395, 210, 358, 260, 330, 325, 285, 355, 272, 385, 270, 420, 282, 470, 300, 505, 300, 535, 292, 565, 262, 595, 250, 655, 244, 720, 244]],
    ['g', [100, 488, 145, 495, 175, 495, 205, 488, 235, 478, 265, 472, 295, 466, 330, 425, 385, 365, 445, 325, 475, 285, 505, 260, 535, 228, 565, 210, 595, 200, 650, 235, 680, 258, 715, 272, 745, 260, 775, 260, 805, 245, 835, 240, 865, 210, 900, 185]],
    ['h', [175, 240, 225, 200, 265, 186, 295, 192, 355, 250, 385, 253, 415, 250, 445, 215]]]);
  line('main-lines', '#ffffff', [['a', [62, 405, 106, 395, 150, 382, 215, 380, 258, 390, 302, 405, 345, 395, 389, 375, 432, 345, 476, 315, 519, 298, 541, 300, 585, 325, 628, 360, 671, 385, 715, 430, 760, 462, 780, 462, 802, 450, 846, 445, 889, 448, 933, 445, 976, 445, 1020, 452, 1064, 458, 1086, 463, 1108, 450, 1151, 420, 1195, 385, 1238, 380, 1282, 362, 1325, 335, 1391, 310, 1434, 308, 1478, 318, 1521, 335]],
    ['f', [85, 478, 130, 340, 165, 250, 190, 212, 210, 200, 235, 205, 265, 255, 295, 305, 325, 332, 355, 344, 385, 338, 415, 310, 445, 285, 475, 270, 505, 255, 535, 245, 565, 222, 595, 218, 625, 214, 655, 232, 685, 240, 715, 262]],
    ['g', [55, 522, 85, 510, 115, 488, 145, 484, 175, 464, 205, 455, 235, 448, 265, 464, 295, 450, 325, 400, 355, 310, 385, 260, 415, 222, 445, 200, 475, 178, 505, 172, 535, 176, 565, 195, 595, 200, 625, 270, 655, 322, 685, 345, 715, 345, 745, 325, 775, 260, 805, 190, 835, 125, 865, 65, 895, 57]],
    ['c', [1173, 517, 1195, 530, 1216, 530, 1238, 570, 1260, 615, 1282, 662, 1303, 690, 1325, 693, 1347, 640, 1368, 555]]]);

  /* ---------- volume ---------- */
  grid('vol-grid', [511, 557, 604, 650]);
  el('vol-grid', 'path', { d: 'M1360.500 491V698', stroke: '#8b0000' });
  var vol = [
    'c',687,'c',680,'c',673,'r',662,'c',677,'r',682,'r',683,'r',684,'c',686,'c',675,'c',677,'r',675,'r',667,'r',677,'r',680,'c',678,'r',674,'r',668,'r',663,'c',678,
    'c',680,'r',683,'c',681,'r',684,'c',682,'c',683,'c',683,'r',686,'c',682,'c',683,'r',689,'c',685,'r',687,'r',681,'r',681,'c',679,'c',678,'r',677,'r',677,'c',681,
    'c',685,'c',669,'c',679,'c',683,'r',686,'r',680,'c',682,'c',686,'r',651,'r',662,'c',671,'r',680,'r',679,'r',673,'c',681,'r',666,'c',668,'c',676,'r',662,'c',672,
    'c',675,'r',672,'c',670,'r',681,'c',680,'c',684,'c',682,'c',683,
    'r',644,'r',634,'r',511,'r',520,'c',588,'c',601,'c',624,'c',617,'r',647,'r',624,'r',648,'r',626,'r',603,'c',606,'c',640,'c',629,'r',645,'r',618,'c',591,'c',638,
    'c',640,'r',663,'r',633,'c',662,'r',667,'r',664,'r',643,'c',651,'r',634,'c',627,'r',653,'c',652,'r',621,'r',538,'r',543,'r',543,'c',572,'c',616,'r',604,'c',553,
    'r',605,'c',618,'r',625,'c',630,'r',639,'c',644,'r',633,'r',645,'r',550,'c',564,'r',612,'r',535,'c',556,'r',607,'r',641,'r',634,'c',626,'c',648,'c',619,'c',660,
    'r',669,'r',555,'r',518
  ];
  for (var v = 0, k = 0; v < vol.length; v += 2, k++) {
    var vx = X(k), vy = vol[v + 1];
    if (vol[v] === 'r') el('vol-bars', 'rect', { x: vx - 2.5, y: vy + .5, width: 6, height: 697 - vy - .5, fill: '#000', stroke: RED });
    else el('vol-bars', 'rect', { x: vx - 3, y: vy, width: 7, height: 697 - vy, fill: CY });
  }
  line('vol-lines', '#ffffff', [['d', [62, 200, 128, 185, 172, 175, 237, 178, 345, 170, 432, 168, 454, 160, 541, 172, 606, 182, 693, 190, 780, 192, 867, 183, 955, 182, 1042, 178, 1086, 185, 1151, 168, 1216, 165, 1282, 160, 1347, 155, 1434, 157, 1500, 165, 1521, 170]],
    ['r', [700, 675, 718, 670, 730, 648, 746, 632, 764, 620, 780, 608, 799, 601, 819, 602, 838, 617, 858, 626, 874, 629, 890, 624, 911, 626, 934, 633, 966, 643, 998, 649, 1028, 647, 1051, 620, 1067, 608, 1090, 597, 1120, 582, 1129, 582, 1152, 605, 1173, 619, 1191, 615, 1210, 615, 1230, 600, 1255, 598, 1278, 597, 1297, 615, 1311, 620, 1318, 621, 1328, 610]]]);
  line('vol-lines', '#ffff00', [['d', [62, 195, 106, 180, 150, 168, 193, 168, 237, 185, 280, 185, 345, 165, 410, 165, 454, 160, 497, 160, 541, 178, 585, 188, 650, 190, 715, 192, 780, 190, 846, 180, 911, 176, 955, 175, 1020, 180, 1086, 190, 1130, 155, 1195, 145, 1238, 165, 1282, 158, 1347, 152, 1412, 155, 1478, 175, 1521, 188]],
    ['r', [709, 675, 720, 660, 731, 620, 748, 580, 768, 569, 776, 587, 787, 617, 794, 620, 808, 633, 824, 632, 838, 622, 858, 622, 884, 627, 902, 620, 920, 627, 934, 643, 957, 657, 978, 657, 996, 643, 1017, 643, 1031, 637, 1042, 620, 1067, 564, 1079, 563, 1090, 576, 1099, 577, 1115, 598, 1136, 602, 1143, 617, 1148, 622, 1159, 631, 1177, 638, 1191, 620, 1207, 602, 1228, 563, 1249, 590, 1260, 598, 1272, 620, 1281, 632, 1295, 635, 1308, 644, 1318, 632, 1328, 605]]]);

  /* ---------- MACD ---------- */
  grid('macd-grid', [738, 753, 788, 823, 857]);
  el('macd-grid', 'path', { d: 'M1360.500 718V877.500H22', stroke: '#8b0000', fill: 'none' });
  [23, 158, 358, 519, 739, 969, 1158, 1318].forEach(function (x) {
    el('macd-grid', 'path', { d: 'M' + (x + .5) + ' 877v4', stroke: '#8b0000' });
  });
  var mz = [558,558,565,548,556,568,570,575,585,597,617,622,595,597,590,592,587,577,555,562,555,567,587,597,620,636,654,654,662,680,687,702,702,682,655,643,655,642,630,624,617,612,610,610,612,603,607,607,585,565,560,556,550,546,548,547,546,550,545,545,547,558,563,575,585,597,614,628,
    590,528,440,392,405,440,502,558,595,618,636,630,614,612,614,622,627,580,597,622,666,680,672,675,678,672,648,645,627,634,630,654,622,540,504,470,480,506,474,498,516,588,620,687,717,735,729,666,592,556,556,516,528,558,592,608,650,678,741,771,726,636,506];
  mz.forEach(function (m, i) {
    if (m === 610) return;
    var bx = X(i) + .5, by = 620 + m / 3;
    el('macd-bars', 'path', { d: 'M' + bx + ' 823V' + by.toFixed(0), stroke: m < 610 ? RED : GR });
  });
  line('macd-lines', '#ffffff', [['d', [62, 607, 106, 600, 128, 587, 193, 577, 237, 575, 258, 585, 302, 598, 345, 585, 410, 575, 454, 548, 497, 538, 541, 545, 606, 570, 671, 600, 715, 625, 759, 663, 802, 655, 846, 663, 889, 663, 940, 653, 1086, 653, 1130, 625, 1173, 612, 1238, 585, 1303, 565, 1391, 530, 1478, 540, 1521, 558]],
    ['e', [0, 550, 40, 510, 62, 440, 84, 380, 105, 362, 127, 360, 150, 375, 175, 403, 215, 428, 258, 443, 300, 432, 365, 445, 388, 418, 410, 425, 430, 445, 455, 470, 475, 483, 520, 490, 560, 513, 585, 505, 628, 502, 675, 510, 693, 525, 715, 505, 760, 420, 785, 392, 825, 388, 846, 355, 890, 355, 920, 395, 955, 445, 1020, 510, 1050, 470, 1086, 420, 1108, 417, 1130, 385, 1150, 382, 1215, 412, 1260, 470, 1303, 548, 1325, 540, 1347, 500, 1368, 423]]]);
  line('macd-lines', '#ffff00', [['d', [62, 632, 128, 615, 172, 603, 237, 590, 302, 593, 410, 580, 497, 560, 541, 553, 606, 560, 671, 578, 737, 605, 802, 632, 867, 648, 911, 653, 1086, 653, 1151, 640, 1238, 620, 1325, 585, 1412, 553, 1478, 547, 1521, 550]],
    ['e', [0, 550, 40, 540, 62, 515, 105, 465, 150, 428, 190, 424, 260, 430, 360, 433, 430, 432, 520, 462, 585, 487, 650, 495, 700, 505, 740, 495, 800, 450, 860, 410, 900, 395, 940, 395, 990, 425, 1040, 458, 1100, 445, 1160, 418, 1220, 415, 1260, 428, 1310, 473, 1347, 485, 1368, 468]]], 1.2);
})();
```
